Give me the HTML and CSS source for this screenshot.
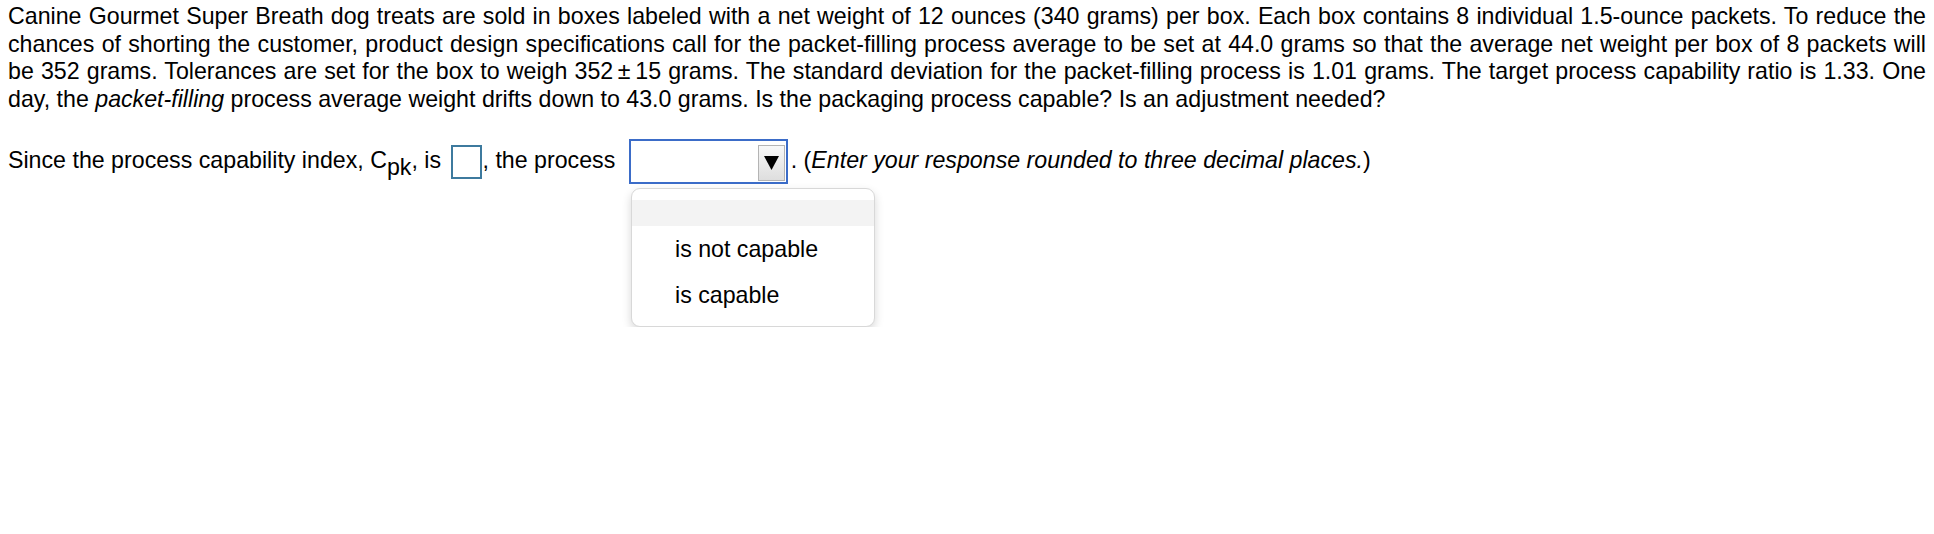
FILE: index.html
```html
<!DOCTYPE html>
<html>
<head>
<meta charset="utf-8">
<link rel="stylesheet" href="styles.css">
</head>
<body>
<div class="question">
  <p class="stem">Canine Gourmet Super Breath dog treats are sold in boxes labeled with a net weight of 12 ounces (340 grams) per box. Each box contains 8 individual 1.5-ounce packets. To reduce the chances of shorting the customer, product design specifications call for the packet-filling process average to be set at 44.0 grams so that the average net weight per box of 8 packets will be 352 grams. Tolerances are set for the box to weigh 352&thinsp;&plusmn;&thinsp;15 grams. The standard deviation for the packet-filling process is 1.01 grams. The target process capability ratio is 1.33. One day, the <i>packet-filling</i> process average weight drifts down to 43.0 grams. Is the packaging process capable? Is an adjustment needed?</p>
  <div class="answer-wrap">
    <p class="answer">Since the process capability index, C<sub>pk</sub>, is <span class="input"></span>, the process <span class="select"><span class="arrow"><svg width="15" height="14" viewBox="0 0 15 14"><polygon points="0,0 15,0 7.5,14" fill="#000"/></svg></span></span>. (<i>Enter your response rounded to three decimal places.</i>)</p>
    <ul class="choice-list">
      <li class="choice choice-blank"></li>
      <li class="choice">is not capable</li>
      <li class="choice">is capable</li>
    </ul>
  </div>
</div>
</body>
</html>
```
FILE: styles.css
```css
html, body {
  margin: 0;
  padding: 0;
  background: #fff;
}
body {
  font-family: "Liberation Sans", Arial, sans-serif;
  font-size: 23.2px;
  line-height: 27.5px;
  color: #000;
}
.question {
  padding: 3px 8px 0 8px;
}
.stem {
  margin: 0;
  text-align: justify;
}
.answer-wrap {
  margin-top: 26px;
}
.answer {
  margin: 0;
}
sub {
  font-size: 23.2px;
  vertical-align: -7px;
  line-height: 0;
}
.input {
  display: inline-block;
  box-sizing: border-box;
  width: 31px;
  height: 34px;
  border: 2px solid #3d7a9e;
  vertical-align: middle;
  margin: 0 1px 0 3px;
  background: #fff;
}
.select {
  display: inline-flex;
  justify-content: flex-end;
  align-items: flex-start;
  vertical-align: middle;
  box-sizing: border-box;
  width: 159px;
  height: 45px;
  margin-left: 7px;
  margin-right: 3px;
  border: 2px solid #3b6cc8;
  padding: 4px 1px 0 0;
  background: #fff;
}
.arrow {
  box-sizing: border-box;
  width: 27px;
  height: 36px;
  border: 1px solid #b4b4b4;
  background: linear-gradient(#f8f8f8, #dedede);
  display: flex;
  align-items: center;
  justify-content: center;
}
.arrow svg {
  display: block;
}
.choice-list {
  list-style: none;
  margin: 4px 0 0 623px;
  width: 244px;
  box-sizing: border-box;
  padding: 11px 0 8px 0;
  background: #fff;
  border: 1px solid #d8d8d8;
  border-radius: 9px;
  box-shadow: 0 4px 10px rgba(0, 0, 0, 0.16);
}
.choice {
  height: 46px;
  line-height: 46px;
  padding-left: 43px;
  white-space: nowrap;
}
.choice-blank {
  height: 26px;
  background: #f3f3f3;
}
```
